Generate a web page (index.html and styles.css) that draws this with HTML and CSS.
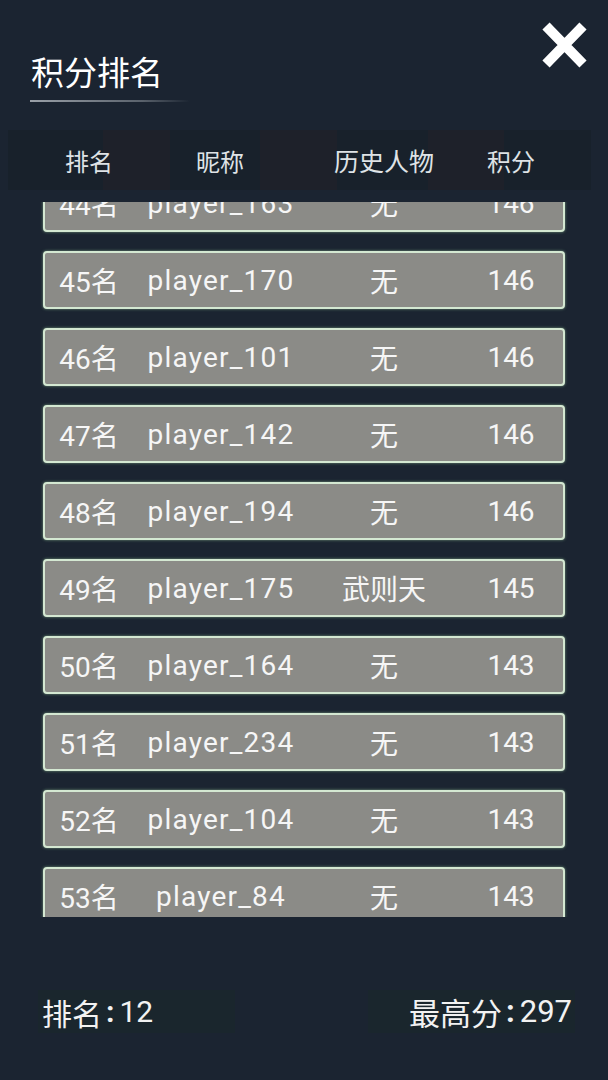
FILE: index.html
```html
<!DOCTYPE html>
<html lang="zh-CN">
<head>
    <meta charset="UTF-8">
    <meta name="viewport" content="width=device-width, initial-scale=1.0">
    <title>积分排名</title>
    <link rel="stylesheet" href="styles.css">
</head>
<body>
    <div class="page">
        <div class="top">
            <div class="title-block">
                <div class="title">积分排名</div>
                <div class="title-line"></div>
            </div>
            <svg class="close" viewBox="0 0 47 46">
                <path d="M5 4 L42 42 M42 4 L5 42" stroke="#ffffff" stroke-width="10" fill="none"/>
            </svg>
        </div>

        <div class="head">
            <span>排名</span>
            <span>昵称</span>
            <span>历史人物</span>
            <span>积分</span>
        </div>

        <div class="list">
            <div class="list-inner">
                <div class="row"><span>44名</span><span class="nick">player_163</span><span>无</span><span>146</span></div>
                <div class="row"><span>45名</span><span class="nick">player_170</span><span>无</span><span>146</span></div>
                <div class="row"><span>46名</span><span class="nick">player_101</span><span>无</span><span>146</span></div>
                <div class="row"><span>47名</span><span class="nick">player_142</span><span>无</span><span>146</span></div>
                <div class="row"><span>48名</span><span class="nick">player_194</span><span>无</span><span>146</span></div>
                <div class="row"><span>49名</span><span class="nick">player_175</span><span>武则天</span><span>145</span></div>
                <div class="row"><span>50名</span><span class="nick">player_164</span><span>无</span><span>143</span></div>
                <div class="row"><span>51名</span><span class="nick">player_234</span><span>无</span><span>143</span></div>
                <div class="row"><span>52名</span><span class="nick">player_104</span><span>无</span><span>143</span></div>
                <div class="row"><span>53名</span><span class="nick">player_84</span><span>无</span><span>143</span></div>
                <div class="row"><span>54名</span><span class="nick">player_90</span><span>无</span><span>142</span></div>
            </div>
        </div>

        <div class="foot">
            <div class="stat stat-left">排名<span class="colon">:</span>12</div>
            <div class="stat stat-right">最高分<span class="colon">:</span>297</div>
        </div>
    </div>
</body>
</html>
```

FILE: styles.css
```css
body {
    margin: 0;
    padding: 0;
    background: #1b2431;
    font-family: Roboto, "Noto Sans CJK SC", sans-serif;
    color: #f2f2f2;
}

.page {
    width: 608px;
    height: 1080px;
    overflow: hidden;
}

.top {
    height: 130px;
    display: flex;
    justify-content: space-between;
    padding: 0 20px 0 30px;
}

.title-block {
    padding-top: 54px;
}

.title {
    font-size: 33px;
    line-height: 40px;
    padding-left: 1px;
    color: #ffffff;
}

.title-line {
    width: 160px;
    height: 2px;
    margin-top: 6px;
    background: linear-gradient(to right, #9aa0a8 0%, #5a626c 70%, rgba(90, 98, 108, 0) 100%);
}

.close {
    width: 47px;
    height: 46px;
    margin-top: 22px;
}

.head {
    height: 60px;
    margin: 0 17px 0 8px;
    padding-left: 37px;
    display: grid;
    grid-template-columns: 88px 174px 154px 100px;
    align-items: center;
    font-size: 24px;
    color: #dfe3e6;
    background: linear-gradient(to right,
        #18212b 0px, #18212b 95px,
        #1e212a 95px, #1e212a 162px,
        #18212b 162px, #18212b 252px,
        #1e212a 252px, #1e212a 329px,
        #18212b 329px, #18212b 420px,
        #1e212a 420px, #1e212a 496px,
        #18212b 496px);
}

.head span:nth-child(3) {
    font-size: 25px;
}

.head span,
.row span {
    text-align: center;
}

.list {
    height: 715px;
    margin-top: 12px;
    overflow: hidden;
}

.list-inner {
    margin-top: -28px;
    padding-left: 43px;
    display: flex;
    flex-direction: column;
    gap: 19px;
}

.row {
    width: 522px;
    height: 58px;
    box-sizing: border-box;
    border: 2px solid #d4e8d2;
    border-radius: 4px;
    background: #8b8b87;
    box-shadow: 0 0 3px rgba(170, 225, 170, 0.6);
    display: grid;
    grid-template-columns: 88px 174px 154px 100px;
    align-items: center;
    font-size: 28px;
    color: #f6f6f6;
}

.row .nick {
    letter-spacing: 1.2px;
    padding-left: 2px;
}

.foot {
    margin-top: 73px;
    padding: 0 33px 0 38px;
    display: flex;
    justify-content: space-between;
}

.stat {
    height: 43px;
    display: flex;
    align-items: center;
    font-size: 30px;
    background: #1a262d;
}

.colon {
    padding: 0 5px 0 4px;
    font-weight: bold;
}

.stat-left {
    width: 197px;
    padding-left: 4px;
    box-sizing: border-box;
}

.stat-right {
    width: 207px;
    justify-content: flex-end;
    padding-right: 3px;
    box-sizing: border-box;
    font-size: 31px;
}
```
